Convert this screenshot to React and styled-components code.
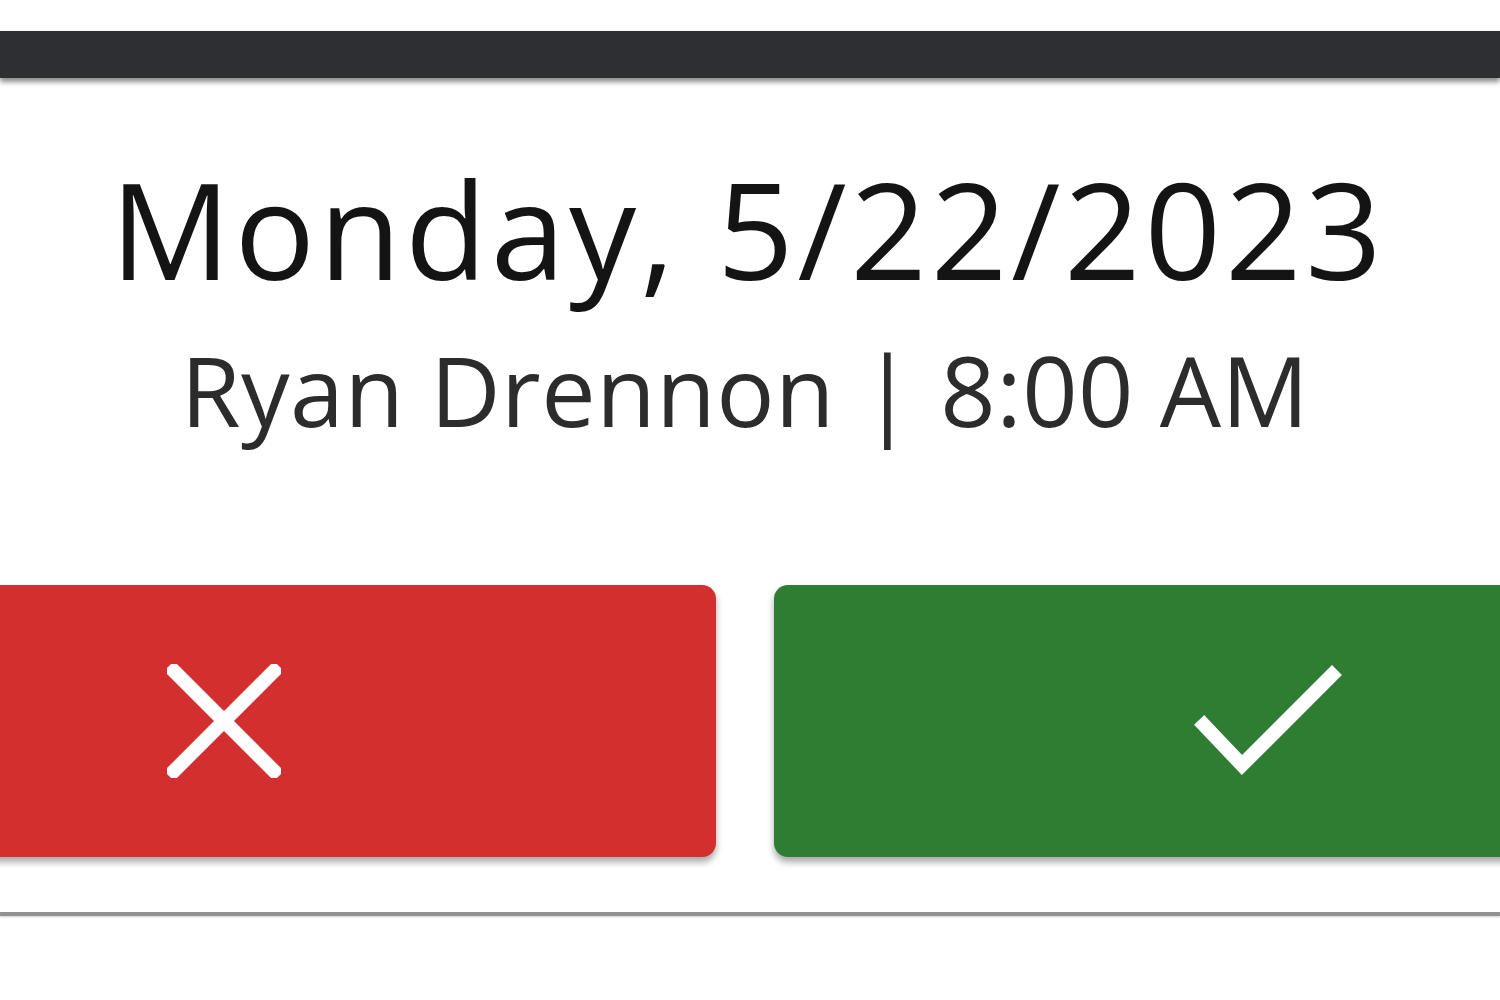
import React from 'react';
import styled, { createGlobalStyle } from 'styled-components';

const GlobalStyle = createGlobalStyle`
  html, body {
    margin: 0;
    padding: 0;
    background: #fff;
    overflow: hidden;
  }
  body {
    font-family: 'Open Sans', 'Liberation Sans', sans-serif;
  }
`;

const Page = styled.div`
  width: 1500px;
  height: 1000px;
  padding-top: 31px;
  box-sizing: border-box;
  overflow: hidden;
`;

const TopBar = styled.div`
  height: 47px;
  background: #2e2f33;
  box-shadow: 0 4px 5px rgba(0, 0, 0, 0.45);
  position: relative;
  z-index: 1;
`;

const Card = styled.div`
  display: flex;
  flex-direction: column;
  align-items: center;
  padding-top: 83px;
  height: 838px;
  box-sizing: border-box;
  border-bottom: 4px solid #929292;
  box-shadow: 0 1px 2px rgba(0, 0, 0, 0.2);
`;

const DateTitle = styled.h1`
  margin: 0;
  font-size: 134px;
  line-height: 1;
  font-weight: 400;
  letter-spacing: 3.8px;
  color: #141414;
  padding-right: 4px;
`;

const SubTitle = styled.div`
  margin-top: 46px;
  font-size: 97px;
  line-height: 1;
  letter-spacing: 0.5px;
  color: #2c2c2c;
  padding-right: 10px;
`;

const ButtonRow = styled.div`
  display: flex;
  justify-content: center;
  gap: 58px;
  width: 100%;
  margin-top: 147px;
  padding-right: 10px;
  box-sizing: border-box;
`;

const ActionButton = styled.button`
  flex: 0 0 985px;
  height: 272px;
  border: none;
  border-radius: 14px;
  background: ${(p) => (p.$tone === 'decline' ? '#d32f2f' : '#2e7d32')};
  box-shadow: 0 5px 7px rgba(0, 0, 0, 0.35);
  display: flex;
  align-items: center;
  justify-content: center;
  cursor: pointer;
`;

const CloseIcon = () => (
  <svg width="114" height="114" viewBox="0 0 114 114" fill="none">
    <path
      d="M7 7 L107 107 M107 7 L7 107"
      stroke="#fff"
      strokeWidth="14"
      strokeLinecap="square"
    />
  </svg>
);

const CheckIcon = () => (
  <svg width="150" height="120" viewBox="0 0 150 120" fill="none">
    <path
      d="M12 64 L50 104 L140 14"
      stroke="#fff"
      strokeWidth="14"
      strokeLinecap="square"
      strokeLinejoin="miter"
    />
  </svg>
);

const App = () => {
  return (
    <Page>
      <GlobalStyle />
      <TopBar />
      <Card>
        <DateTitle>Monday, 5/22/2023</DateTitle>
        <SubTitle>Ryan Drennon | 8:00 AM</SubTitle>
        <ButtonRow>
          <ActionButton $tone='decline' aria-label='Decline'>
            <CloseIcon />
          </ActionButton>
          <ActionButton $tone='accept' aria-label='Accept'>
            <CheckIcon />
          </ActionButton>
        </ButtonRow>
      </Card>
    </Page>
  );
};

export default App;
